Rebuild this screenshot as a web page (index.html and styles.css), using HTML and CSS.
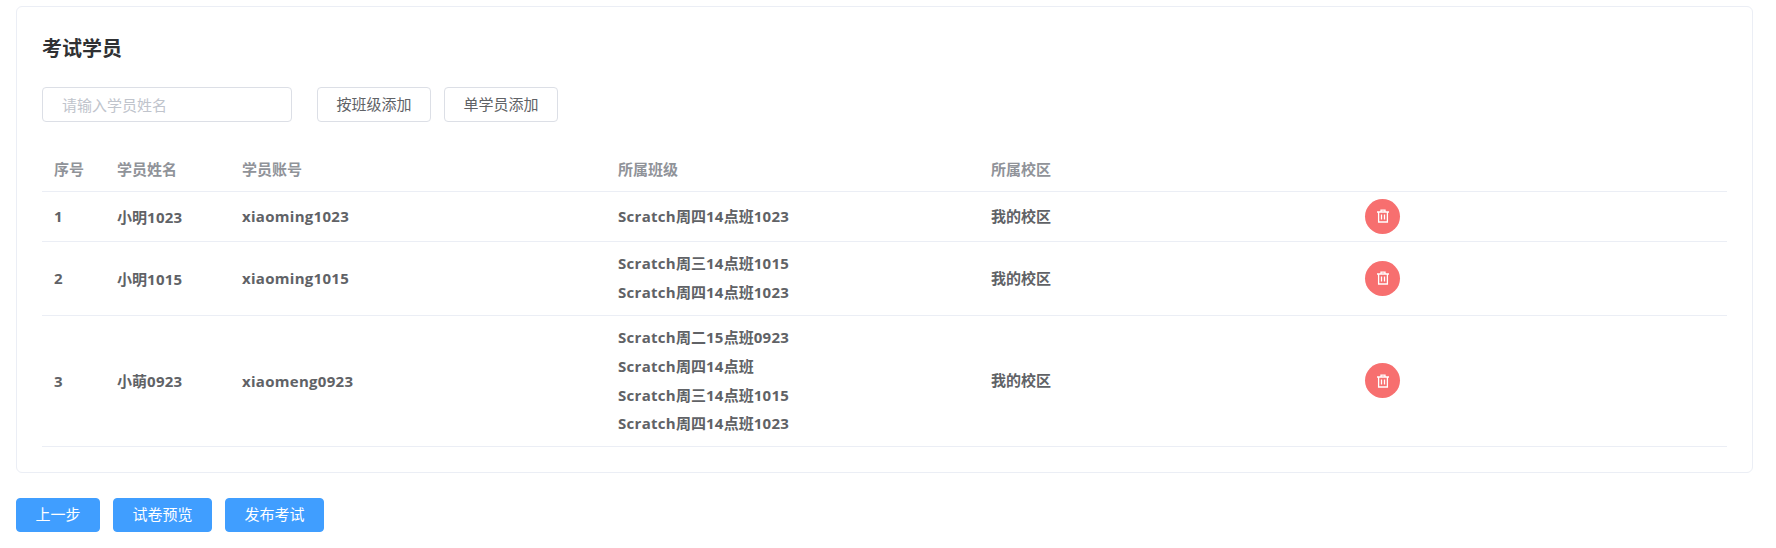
FILE: index.html
```html
<!DOCTYPE html>
<html lang="zh-CN">
<head>
<meta charset="utf-8">
<title>考试学员</title>
<link rel="stylesheet" href="styles.css">
</head>
<body>
<main class="page">
  <section class="card">
    <h2 class="title">考试学员</h2>
    <div class="toolbar">
      <input class="search" type="text" placeholder="请输入学员姓名">
      <button class="btn" type="button">按班级添加</button>
      <button class="btn" type="button">单学员添加</button>
    </div>
    <table class="table">
      <colgroup>
        <col class="c-index"><col class="c-name"><col class="c-account"><col class="c-class"><col class="c-campus"><col class="c-action">
      </colgroup>
      <thead>
        <tr><th>序号</th><th>学员姓名</th><th>学员账号</th><th>所属班级</th><th>所属校区</th><th></th></tr>
      </thead>
      <tbody>
        <tr class="row-1">
          <td><span class="lat">1</span></td><td>小明<span class="lat">1023</span></td><td><span class="lat">xiaoming1023</span></td>
          <td><div class="line"><span class="lat">Scratch</span>周四<span class="lat">14</span>点班<span class="lat">1023</span></div></td>
          <td><span class="cjk">我的校区</span></td>
          <td><button class="del" type="button" aria-label="删除"><svg class="del-icon" viewBox="0 0 14 14"><path d="M1 3h12M5 3V1.200h4V3M2.600 3v10h8.800V3M5.500 5.500v5M8.500 5.500v5"/></svg></button></td>
        </tr>
        <tr class="row-2">
          <td><span class="lat">2</span></td><td>小明<span class="lat">1015</span></td><td><span class="lat">xiaoming1015</span></td>
          <td><div class="line"><span class="lat">Scratch</span>周三<span class="lat">14</span>点班<span class="lat">1015</span></div><div class="line"><span class="lat">Scratch</span>周四<span class="lat">14</span>点班<span class="lat">1023</span></div></td>
          <td><span class="cjk">我的校区</span></td>
          <td><button class="del" type="button" aria-label="删除"><svg class="del-icon" viewBox="0 0 14 14"><path d="M1 3h12M5 3V1.200h4V3M2.600 3v10h8.800V3M5.500 5.500v5M8.500 5.500v5"/></svg></button></td>
        </tr>
        <tr class="row-3">
          <td><span class="lat">3</span></td><td>小萌<span class="lat">0923</span></td><td><span class="lat">xiaomeng0923</span></td>
          <td><div class="line"><span class="lat">Scratch</span>周二<span class="lat">15</span>点班<span class="lat">0923</span></div><div class="line"><span class="lat">Scratch</span>周四<span class="lat">14</span>点班</div><div class="line"><span class="lat">Scratch</span>周三<span class="lat">14</span>点班<span class="lat">1015</span></div><div class="line"><span class="lat">Scratch</span>周四<span class="lat">14</span>点班<span class="lat">1023</span></div></td>
          <td><span class="cjk">我的校区</span></td>
          <td><button class="del" type="button" aria-label="删除"><svg class="del-icon" viewBox="0 0 14 14"><path d="M1 3h12M5 3V1.200h4V3M2.600 3v10h8.800V3M5.500 5.500v5M8.500 5.500v5"/></svg></button></td>
        </tr>
      </tbody>
    </table>
  </section>
  <div class="actions">
    <button class="btn btn-primary btn-short" type="button">上一步</button>
    <button class="btn btn-primary" type="button">试卷预览</button>
    <button class="btn btn-primary" type="button">发布考试</button>
  </div>
</main>
</body>
</html>
```
FILE: styles.css
```css
* { box-sizing: border-box; }
html, body { margin: 0; padding: 0; background: #fff; }
body {
  font-family: "Open Sans", "Noto Sans CJK SC", sans-serif;
  font-size: 15px;
  color: #606266;
}
.page { padding: 6px 23px 0 16px; }
.card {
  border: 1px solid #ebeef5;
  border-radius: 6px;
  padding: 25px;
  background: #fff;
}
.title {
  margin: 0 0 21px;
  font-size: 20px;
  line-height: 34px;
  font-weight: 700;
  color: #303133;
}
.toolbar { display: flex; align-items: center; height: 35px; }
.search {
  width: 250px;
  height: 35px;
  padding: 0 19px;
  border: 1px solid #dcdfe6;
  border-radius: 4px;
  font: inherit;
  color: #606266;
  outline: none;
  margin-right: 25px;
}
.search::placeholder { color: #c0c4cc; opacity: 1; }
.btn {
  height: 35px;
  padding: 0 20px;
  border: 1px solid #dcdfe6;
  border-radius: 4px;
  background: #fff;
  color: #606266;
  font: inherit;
  line-height: 1;
}
.toolbar .btn { width: 114px; padding: 0; }
.toolbar .btn + .btn { margin-left: 13px; }
.table {
  width: 1685px;
  margin-top: 25px;
  border-collapse: collapse;
  table-layout: fixed;
}
.c-index { width: 63px; }
.c-name { width: 125px; }
.c-account { width: 376px; }
.c-class { width: 373px; }
.c-campus { width: 374px; }
.c-action { width: 374px; }
th, td {
  padding: 0 12px;
  text-align: left;
  border-bottom: 1px solid #ebeef5;
  font-weight: 700;
  vertical-align: middle;
}
th { height: 44px; color: #909399; }
.row-1 { height: 50px; }
.row-2 { height: 74px; }
.row-3 { height: 131px; }
.line { line-height: 28.800px; }
.lat { letter-spacing: .29px; }
.cjk { position: relative; top: -1px; }
.del {
  display: flex;
  align-items: center;
  justify-content: center;
  width: 35px;
  height: 35px;
  padding: 0;
  border: 0;
  border-radius: 50%;
  background: #f76f6f;
}
.del-icon {
  width: 14px;
  height: 14px;
  fill: none;
  stroke: #fff;
  stroke-width: 1.300;
}
.actions { display: flex; gap: 13px; margin-top: 25px; }
.btn-primary {
  width: 99px;
  padding: 0;
  height: 34px;
  border-color: #409eff;
  background: #409eff;
  color: #fff;
}
.btn-short { width: 84px; }
```
